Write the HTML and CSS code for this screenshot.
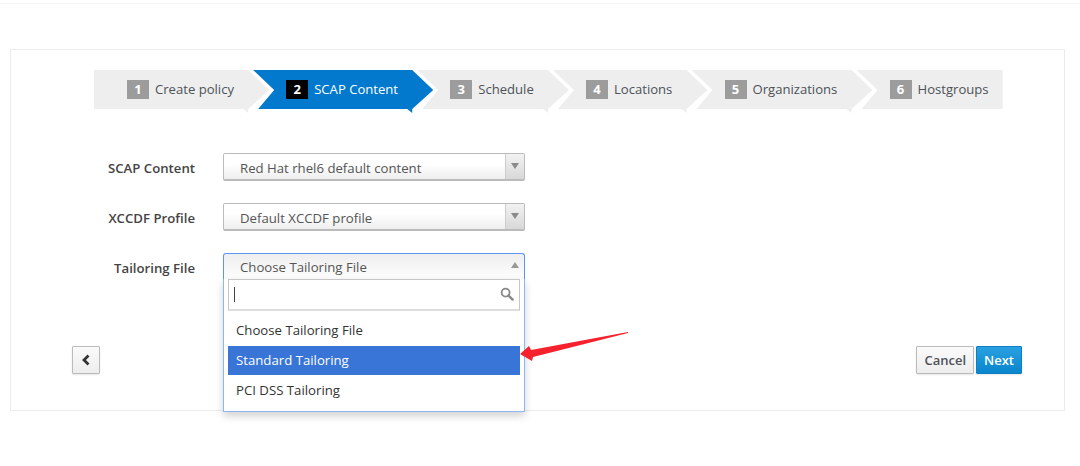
FILE: index.html
```html
<!DOCTYPE html>
<html lang="en">
<head>
<meta charset="utf-8">
<title>SCAP Content</title>
<link rel="stylesheet" href="styles.css">
</head>
<body>
<div class="topline"></div>
<main class="panel">
  <ol class="steps">
    <li class="step first"><span class="num">1</span><span>Create policy</span></li>
    <li class="step active"><span class="num">2</span><span>SCAP Content</span></li>
    <li class="step"><span class="num">3</span><span>Schedule</span></li>
    <li class="step"><span class="num">4</span><span>Locations</span></li>
    <li class="step"><span class="num">5</span><span>Organizations</span></li>
    <li class="step last"><span class="num">6</span><span>Hostgroups</span></li>
  </ol>
  <form class="form">
    <div class="row">
      <label class="label">SCAP Content</label>
      <div class="select"><span class="value">Red Hat rhel6 default content</span><span class="caret"><i class="tri down"></i></span></div>
    </div>
    <div class="row">
      <label class="label">XCCDF Profile</label>
      <div class="select"><span class="value">Default XCCDF profile</span><span class="caret"><i class="tri down"></i></span></div>
    </div>
    <div class="row">
      <label class="label">Tailoring File</label>
      <div class="select open"><span class="value">Choose Tailoring File</span><span class="caret plain"><i class="tri up"></i></span>
        <div class="drop">
          <div class="search">
            <span class="cursor"></span>
            <svg class="glass" width="14" height="14" viewBox="0 0 14 14"><circle cx="5.6" cy="5.6" r="4" fill="none" stroke="#888" stroke-width="1.8"/><path d="M8.6 8.6 L12.6 12.6" stroke="#888" stroke-width="2.4" stroke-linecap="round"/></svg>
          </div>
          <ul class="options">
            <li class="option top">Choose Tailoring File</li>
            <li class="option hl">Standard Tailoring</li>
            <li class="option">PCI DSS Tailoring</li>
          </ul>
        </div>
      </div>
    </div>
  </form>
  <div class="footer">
    <button class="btn back" type="button"><svg width="10" height="12" viewBox="0 0 10 12"><path d="M7.5 1.5 L3 6 L7.5 10.5" fill="none" stroke="#333" stroke-width="2.8"/></svg></button>
    <div class="actions">
      <button class="btn" type="button">Cancel</button>
      <button class="btn primary" type="button">Next</button>
    </div>
  </div>
</main>
<svg class="pointer" width="112" height="32" viewBox="0 0 112 32"><polygon points="0,22 9,14 11,18 108,0 108,1 13,25 12,29" fill="#f5222d"/></svg>
</body>
</html>
```

FILE: styles.css
```css
* { box-sizing: border-box; }
html, body { margin: 0; padding: 0; background: #fff; }
body {
  font-family: "Open Sans", "Liberation Sans", sans-serif;
  font-size: 13.2px;
  color: #444;
  height: 466px;
  overflow: hidden;
}
.topline { height: 4px; border-bottom: 1px solid #f5f5f5; }
.panel {
  margin: 45px 15px 0 10px;
  height: 362px;
  border: 1px solid #ececec;
  padding-top: 20px;
}
.steps {
  display: flex;
  list-style: none;
  margin: 0 0 0 83px;
  padding: 0;
  height: 43px;
}
.step {
  display: flex;
  align-items: flex-start;
  height: 43px;
  padding: 9px 35.2px 0 33px;
  margin-left: -16px;
  background: #eee;
  color: #4d5258;
  font-size: 13.1px;
  line-height: 21px;
  white-space: nowrap;
  clip-path: polygon(0 0, calc(100% - 21px) 0, 100% 20px, calc(100% - 21px) 39px, calc(100% - 21px) 43px, calc(100% - 26px) 39px, 5px 39px, 21px 20px);
}
.step.first {
  margin-left: 0;
  clip-path: polygon(0 0, calc(100% - 21px) 0, 100% 20px, calc(100% - 21px) 39px, calc(100% - 21px) 43px, calc(100% - 26px) 39px, 0 39px);
}
.step.last {
  padding-right: 14px;
  clip-path: polygon(0 0, 100% 0, 100% 39px, 5px 39px, 21px 20px);
}
.step.active { background: #0279cc; color: #fff; }
.num {
  width: 22px;
  height: 19px;
  margin: 1px 6px 0 0;
  background: #9c9c9c;
  color: #fff;
  font-weight: 700;
  font-size: 13px;
  line-height: 19px;
  text-align: center;
}
.active .num { background: #000; }
.form {
  display: flex;
  flex-direction: column;
  gap: 22px;
  margin-top: 40px;
}
.row { display: flex; align-items: center; height: 28px; }
.label {
  width: 184px;
  margin-right: 28px;
  padding-top: 2px;
  text-align: right;
  font-weight: 600;
  color: #444;
}
.select {
  position: relative;
  display: flex;
  width: 302px;
  height: 28px;
  border: 2px solid #bbb;
  border-width: 1px 1px 2px 1px;
  border-radius: 2px;
  background: linear-gradient(#fff 40%, #eee);
}
.value { flex: 1; padding-left: 16px; line-height: 29px; color: #555; }
.caret {
  width: 19px;
  border-left: 1px solid #ccc;
  background: linear-gradient(#f2f2f2, #d8d8d8);
  display: flex;
  justify-content: center;
  padding-top: 9px;
}
.caret.plain { border-left: 0; background: none; }
.tri { width: 0; height: 0; border-left: 4px solid transparent; border-right: 4px solid transparent; }
.tri.down { border-top: 6px solid #8a8a8a; }
.tri.up { border-bottom: 6px solid #999; margin-top: -1px; }
.select.open {
  border: 1px solid #5b96f0;
  border-bottom: 0;
  border-radius: 3px 3px 0 0;
  background: linear-gradient(#eee, #fff);
}
.open .value { line-height: 27px; }
.drop {
  position: absolute;
  top: 25px;
  left: -1px;
  width: 302px;
  height: 133px;
  padding: 0 4px;
  background: #fff;
  border: 1px solid #8fb5f2;
  border-top: 0;
  box-shadow: 0 4px 8px rgba(0, 0, 0, .18);
  z-index: 2;
}
.search {
  position: relative;
  height: 32px;
  border: 1px solid #c6c6c6;
  border-bottom: 2px solid #ddd;
  background: #fff;
}
.cursor { position: absolute; left: 5px; top: 7px; width: 1px; height: 15px; background: #444; }
.glass { position: absolute; right: 5px; top: 7px; }
.options { list-style: none; margin: 5px 0 0; padding: 0; }
.option { height: 30px; line-height: 30px; padding-left: 8px; color: #333; }
.option.top { line-height: 29px; }
.option.hl { background: #3875d7; color: #fff; height: 29px; line-height: 29px; }
.footer {
  display: flex;
  justify-content: space-between;
  margin: 65px 42px 0 61px;
}
.actions { display: flex; gap: 2px; }
.btn {
  height: 28px;
  padding: 0 7px;
  font: 600 13px "Open Sans", "Liberation Sans", sans-serif;
  color: #4d5258;
  border: 1px solid #bbb;
  border-radius: 1px;
  background: linear-gradient(#fafafa, #ededed);
  box-shadow: 0 1px 2px rgba(0, 0, 0, .1);
}
.btn.back { width: 28px; padding: 0; display: flex; align-items: center; justify-content: center; }
.btn.primary { color: #fff; border-color: #0d7fc2; background: linear-gradient(#2aa0e0, #0a86cd); }
.pointer { position: absolute; left: 520px; top: 332px; z-index: 3; }
```
